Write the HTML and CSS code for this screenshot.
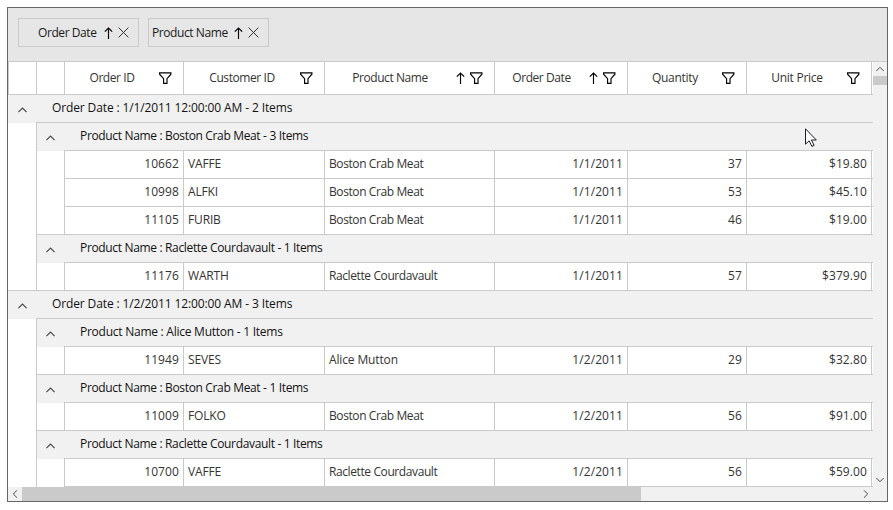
FILE: index.html
```html
<!DOCTYPE html>
<html lang="en">
<head>
<meta charset="utf-8">
<title>Orders</title>
<link rel="stylesheet" href="styles.css">
</head>
<body>
<svg class="defs" width="0" height="0">
  <symbol id="funnel" viewBox="0 0 13 12"><path d="M.6.9h11.3v1.3L8 6.6V11.3H4.6V6.6L.6 2.2z" fill="none" stroke="#000" stroke-width="1.15"/></symbol>
  <symbol id="sort" viewBox="0 0 9 12"><path d="M4.5 12V1M.8 4.7l3.7-3.7 3.7 3.7" fill="none" stroke="#000" stroke-width="1.15"/></symbol>
  <symbol id="close" viewBox="0 0 11 11"><path d="M.6.6l9.8 9.8M10.4.6L.6 10.4" fill="none" stroke="#333" stroke-width="1"/></symbol>
  <symbol id="chevron" viewBox="0 0 9 6"><path d="M.4 5.2l4.1-4.1 4.1 4.1" fill="none" stroke="#444" stroke-width="1.1"/></symbol>
</svg>
<main class="frame">
  <div class="drop-area">
    <div class="chip chip-date"><span>Order Date</span><svg class="sort"><use href="#sort"/></svg><svg class="close"><use href="#close"/></svg></div>
    <div class="chip chip-name"><span>Product Name</span><svg class="sort"><use href="#sort"/></svg><svg class="close"><use href="#close"/></svg></div>
  </div>
  <div class="body">
    <div class="grid">
      <div class="row header">
        <div class="cell first"></div><div class="cell"></div>
        <div class="cell"><span>Order ID</span><svg class="funnel"><use href="#funnel"/></svg></div>
        <div class="cell"><span>Customer ID</span><svg class="funnel"><use href="#funnel"/></svg></div>
        <div class="cell sorted"><span>Product Name</span><svg class="sort"><use href="#sort"/></svg><svg class="funnel"><use href="#funnel"/></svg></div>
        <div class="cell sorted"><span>Order Date</span><svg class="sort"><use href="#sort"/></svg><svg class="funnel"><use href="#funnel"/></svg></div>
        <div class="cell loose"><span>Quantity</span><svg class="funnel"><use href="#funnel"/></svg></div>
        <div class="cell loose"><span>Unit Price</span><svg class="funnel"><use href="#funnel"/></svg></div>
        <div class="tail"></div>
      </div>
      <div class="group outer"><div class="toggle"><svg><use href="#chevron"/></svg></div><div class="caption date">Order Date : 1/1/2011 12:00:00 AM - 2 Items</div></div>
      <div class="group inner"><div class="indent"></div><div class="toggle"><svg><use href="#chevron"/></svg></div><div class="caption">Product Name : Boston Crab Meat - 3 Items</div></div>
      <div class="row data"><div class="indent"></div><div class="indent"></div><div class="cell num">10662</div><div class="cell code">VAFFE</div><div class="cell name">Boston Crab Meat</div><div class="cell num">1/1/2011</div><div class="cell num">37</div><div class="cell num">$19.80</div><div class="tail"></div></div>
      <div class="row data"><div class="indent"></div><div class="indent"></div><div class="cell num">10998</div><div class="cell code">ALFKI</div><div class="cell name">Boston Crab Meat</div><div class="cell num">1/1/2011</div><div class="cell num">53</div><div class="cell num">$45.10</div><div class="tail"></div></div>
      <div class="row data end-inner"><div class="indent"></div><div class="indent"></div><div class="cell num">11105</div><div class="cell code">FURIB</div><div class="cell name">Boston Crab Meat</div><div class="cell num">1/1/2011</div><div class="cell num">46</div><div class="cell num">$19.00</div><div class="tail"></div></div>
      <div class="group inner"><div class="indent"></div><div class="toggle"><svg><use href="#chevron"/></svg></div><div class="caption">Product Name : Raclette Courdavault - 1 Items</div></div>
      <div class="row data end-inner end-outer"><div class="indent"></div><div class="indent"></div><div class="cell num">11176</div><div class="cell code">WARTH</div><div class="cell name">Raclette Courdavault</div><div class="cell num">1/1/2011</div><div class="cell num">57</div><div class="cell num">$379.90</div><div class="tail"></div></div>
      <div class="group outer"><div class="toggle"><svg><use href="#chevron"/></svg></div><div class="caption date">Order Date : 1/2/2011 12:00:00 AM - 3 Items</div></div>
      <div class="group inner"><div class="indent"></div><div class="toggle"><svg><use href="#chevron"/></svg></div><div class="caption wide">Product Name : Alice Mutton - 1 Items</div></div>
      <div class="row data end-inner"><div class="indent"></div><div class="indent"></div><div class="cell num">11949</div><div class="cell code">SEVES</div><div class="cell name wide">Alice Mutton</div><div class="cell num">1/2/2011</div><div class="cell num">29</div><div class="cell num">$32.80</div><div class="tail"></div></div>
      <div class="group inner"><div class="indent"></div><div class="toggle"><svg><use href="#chevron"/></svg></div><div class="caption">Product Name : Boston Crab Meat - 1 Items</div></div>
      <div class="row data end-inner"><div class="indent"></div><div class="indent"></div><div class="cell num">11009</div><div class="cell code">FOLKO</div><div class="cell name">Boston Crab Meat</div><div class="cell num">1/2/2011</div><div class="cell num">56</div><div class="cell num">$91.00</div><div class="tail"></div></div>
      <div class="group inner"><div class="indent"></div><div class="toggle"><svg><use href="#chevron"/></svg></div><div class="caption">Product Name : Raclette Courdavault - 1 Items</div></div>
      <div class="row data"><div class="indent"></div><div class="indent"></div><div class="cell num">10700</div><div class="cell code">VAFFE</div><div class="cell name">Raclette Courdavault</div><div class="cell num">1/2/2011</div><div class="cell num">56</div><div class="cell num">$59.00</div><div class="tail"></div></div>
    </div>
    <div class="vscroll">
      <div class="btn"><svg><use href="#chevron"/></svg></div>
      <div class="thumb"></div>
      <div class="btn down"><svg><use href="#chevron"/></svg></div>
    </div>
  </div>
  <div class="hscroll">
    <div class="btn left"><svg><use href="#chevron"/></svg></div>
    <div class="thumb"></div>
    <div class="btn right"><svg><use href="#chevron"/></svg></div>
  </div>
</main>
<svg class="pointer" viewBox="0 0 13 20"><path d="M.5.8v15.4l3.6-3.4 2.8 5.6 2.2-1.1-2.7-5.3h4.9z" fill="#fff" stroke="#1a1a2a" stroke-width="1"/></svg>
</body>
</html>
```

FILE: styles.css
```css
* { box-sizing: border-box; }
body {
  margin: 0;
  width: 893px;
  height: 510px;
  overflow: hidden;
  background: #fff;
  font: 12px/18px "Open Sans", "Noto Sans", sans-serif;
  color: #333;
}
svg { display: block; flex: none; }
.defs { position: absolute; }
.frame {
  width: 881px;
  height: 495px;
  margin: 7px 0 0 7px;
  border: 1px solid #666;
  display: flex;
  flex-direction: column;
}
.drop-area {
  height: 54px;
  background: #e6e6e6;
  border-bottom: 1px solid #cacaca;
  padding: 10px;
  display: flex;
  gap: 9px;
}
.chip {
  width: 121px;
  height: 29px;
  border: 1px solid #cacaca;
  display: flex;
  align-items: center;
  color: #1a1a1a;
  white-space: nowrap;
  letter-spacing: -0.42px;
}
.chip span { flex: none; }
.chip-date { padding-left: 19px; }
.chip-name { padding-left: 3px; }
.chip-date span { width: 66px; }
.chip-name span { width: 82px; }
.chip .close { margin-left: 5px; }
.funnel { width: 13px; height: 12px; }
.sort { width: 9px; height: 12px; }
.close { width: 11px; height: 11px; }
.body { display: flex; height: 425px; }
.grid { width: 865px; }
.row {
  display: grid;
  grid-template-columns: 29px 28px 119px 141px 170px 133px 119px 125px 1px;
  height: 28px;
}
.cell {
  border-right: 1px solid #cacaca;
  border-bottom: 1px solid #cacaca;
  padding: 4px 4px 0;
  white-space: nowrap;
}
.num { text-align: right; letter-spacing: 0.1px; }
.code { letter-spacing: -0.15px; }
.name { letter-spacing: -0.4px; }
.name.wide { letter-spacing: -0.14px; }
.tail { border-bottom: 1px solid #cacaca; }
.header { height: 33px; }
.header .cell { display: flex; align-items: center; padding: 0 11px 0 0; letter-spacing: -0.42px; }
.header .loose { letter-spacing: -0.28px; }
.header .first { border-left: 1px solid #cacaca; }
.header span { flex: 1; text-align: center; }
.header .sort { margin-right: 5px; }
.header .sorted span { margin-right: 1px; }
.indent { border-right: 1px solid #cacaca; background: #fff; }
.end-inner .indent:nth-child(2),
.end-outer .indent { border-bottom: 1px solid #cacaca; }
.group { display: flex; height: 28px; background: #f1f1f1; color: #111; }
.group .indent { width: 29px; }
.toggle { width: 28px; display: flex; justify-content: center; padding-top: 12px; }
.toggle svg { width: 9px; height: 6px; }
.inner .toggle { width: 27px; }
.caption {
  flex: 1;
  border-bottom: 1px solid #cacaca;
  padding: 4px 0 0 16px;
  white-space: nowrap;
  letter-spacing: -0.34px;
}
.caption.date { letter-spacing: -0.12px; }
.caption.wide { letter-spacing: -0.25px; }
.vscroll { width: 14px; background: #f1f1f1; display: flex; flex-direction: column; }
.btn { width: 14px; height: 14px; display: flex; align-items: center; justify-content: center; }
.btn svg { width: 8px; height: 6px; }
.vscroll .thumb { height: 9px; background: #cacaca; }
.down { margin-top: auto; }
.down svg { transform: rotate(180deg); }
.left svg { transform: rotate(-90deg); }
.right svg { transform: rotate(90deg); }
.hscroll { height: 14px; background: #f1f1f1; display: flex; }
.hscroll .thumb { width: 619px; background: #cacaca; }
.right { margin-left: auto; margin-right: 14px; }
.pointer { position: absolute; left: 805px; top: 128px; width: 13px; height: 20px; }
```
